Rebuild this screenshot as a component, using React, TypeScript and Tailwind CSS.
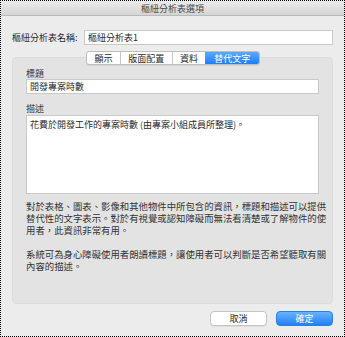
const FONT = "font-['Noto_Sans_CJK_TC','Noto_Sans_CJK_SC',sans-serif]";

const tabs = [
  { label: "顯示", w: "w-[33px]" },
  { label: "版面配置", w: "w-[52px]" },
  { label: "資料", w: "w-[34px]" },
  { label: "替代文字", w: "w-[54px]" },
];

const App = () => {
  const active = 3;

  return (
    <div
      className={`w-[345px] h-[337px] bg-[#ececec] border border-dotted border-black flex flex-col text-[#2b2b2b] ${FONT}`}
    >
      {/* title bar */}
      <div className="h-[15px] flex items-center justify-center bg-gradient-to-b from-[#ebebeb] to-[#d5d5d5] border-b border-[#b9b9b9] text-[9px] leading-none text-[#4a4a4a]">
        樞紐分析表選項
      </div>

      <div className="px-[11px] flex flex-col">
        {/* name row */}
        <div className="mt-[14px] flex items-center h-[15px]">
          <div className="w-[72px] text-[9px] leading-none">樞紐分析表名稱:</div>
          <div className="flex-1 h-[15px] bg-white border border-[#c9c9c9] flex items-center pl-[3px] text-[9px] leading-none">
            樞紐分析表1
          </div>
        </div>

        {/* segmented tabs */}
        <div className="relative z-10 mt-[6px] ml-[74px] flex h-[14px] w-[174px] rounded-[3px] border border-[#bdbdbd] bg-white overflow-hidden shadow-[0_1px_0_rgba(0,0,0,0.05)]">
          {tabs.map((t, i) => (
            <div
              key={t.label}
              className={`${t.w} flex items-center justify-center text-[9px] leading-none ${
                i === active
                  ? "bg-gradient-to-b from-[#5aa9ff] to-[#1c7ef7] text-white"
                  : "text-[#2b2b2b]"
              } ${i > 0 && i !== active && i - 1 !== active ? "border-l border-[#c8c8c8]" : ""}`}
            >
              {t.label}
            </div>
          ))}
        </div>

        {/* panel */}
        <div className="-mt-[8px] h-[247px] rounded-[4px] bg-[#e3e3e3] border border-[#dcdcdc] px-[13px] pt-[9px] flex flex-col">
          <div className="h-[12px] flex items-center text-[9px] leading-none text-[#3a3a3a]">標題</div>
          <div className="h-[15px] bg-white border border-[#c9c9c9] flex items-center pl-[3px] text-[9px] leading-none">
            開發專案時數
          </div>

          <div className="mt-[8px] h-[12px] flex items-center text-[9px] leading-none text-[#3a3a3a]">描述</div>
          <div className="mt-[1px] h-[79px] bg-white border border-[#c9c9c9] pl-[3px] pt-[3px] text-[9px] leading-[11px]">
            花費於開發工作的專案時數 (由專案小組成員所整理)。
          </div>

          <div className="mt-[6px] text-[9.4px] leading-[12px] whitespace-nowrap text-[#333]">
            對於表格、圖表、影像和其他物件中所包含的資訊，標題和描述可以提供
            <br />
            替代性的文字表示。對於有視覺或認知障礙而無法看清楚或了解物件的使
            <br />
            用者，此資訊非常有用。
            <br />
            <br />
            系統可為身心障礙使用者朗讀標題，讓使用者可以判斷是否希望聽取有關
            <br />
            內容的描述。
          </div>
        </div>

        {/* buttons */}
        <div className="mt-[7px] flex justify-end gap-[9px]">
          <div className="w-[57px] h-[15px] rounded-[4px] bg-white border border-[#c4c4c4] flex items-center justify-center text-[9px] leading-none shadow-[0_1px_0_rgba(0,0,0,0.06)]">
            取消
          </div>
          <div className="w-[57px] h-[15px] rounded-[4px] bg-gradient-to-b from-[#69b1fb] to-[#1f80f8] border border-[#2a7fe6] flex items-center justify-center text-[9px] leading-none text-white">
            確定
          </div>
        </div>
      </div>
    </div>
  );
};

export default App;
